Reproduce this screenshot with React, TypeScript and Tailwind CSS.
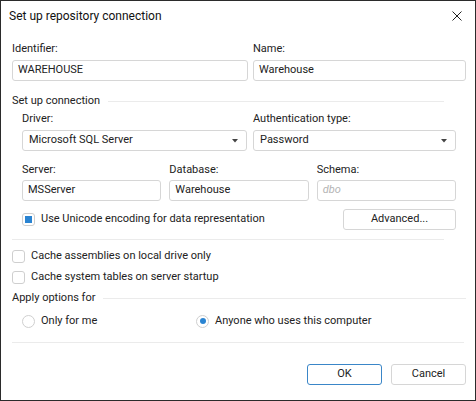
import React from "react";

const font = { fontFamily: 'Roboto, "Liberation Sans", Arial, sans-serif' };

function TextBox({ value, placeholder }: { value?: string; placeholder?: string }) {
  return (
    <div className="flex h-[21px] items-center rounded-[3px] border border-[#d6d6d6] bg-white px-[5px]">
      {value ? (
        <span className="text-[11px] text-[#222]">{value}</span>
      ) : (
        <span className="text-[11px] italic text-[#b4b4b4]">{placeholder}</span>
      )}
    </div>
  );
}

function Combo({ value }: { value: string }) {
  return (
    <div className="flex h-[21px] items-center justify-between rounded-[3px] border border-[#d6d6d6] bg-white pl-[6px] pr-[8px]">
      <span className="text-[11px] text-[#222]">{value}</span>
      <svg width="6" height="4" viewBox="0 0 6 4">
        <path d="M0 0h6L3 3.5z" fill="#444" />
      </svg>
    </div>
  );
}

function Label({ children }: { children: React.ReactNode }) {
  return <div className="flex h-[16px] items-center text-[11px] text-[#222]">{children}</div>;
}

function Check({ checked }: { checked?: boolean }) {
  return (
    <span className="flex h-[13px] w-[13px] shrink-0 items-center justify-center rounded-[3px] border border-[#cfcfcf] bg-white">
      {checked && <span className="h-[7px] w-[7px] bg-[#2a84d2]" />}
    </span>
  );
}

function Radio({ checked }: { checked?: boolean }) {
  return (
    <span className="flex h-[13px] w-[13px] shrink-0 items-center justify-center rounded-full border border-[#cfcfcf] bg-white">
      {checked && <span className="h-[6px] w-[6px] rounded-full bg-[#2a84d2]" />}
    </span>
  );
}

function GroupHeader({ title }: { title: string }) {
  return (
    <div className="flex h-[16px] items-center gap-[8px]">
      <span className="text-[11px] text-[#222]">{title}</span>
      <div className="h-px flex-1 bg-[#ebebeb]" />
    </div>
  );
}

export default function App() {
  return (
    <div
      className="flex h-[401px] w-[476px] flex-col border border-[#2b2b2b] bg-white"
      style={font}
    >
      {/* Title */}
      <div className="flex h-[30px] items-center justify-between pl-[8px] pr-[13px]">
        <span className="text-[12px] text-[#111]">Set up repository connection</span>
        <svg width="10" height="10" viewBox="0 0 10 10">
          <path d="M0.5 0.5l9 9M9.5 0.5l-9 9" stroke="#222" strokeWidth="1" />
        </svg>
      </div>

      <div className="flex flex-1 flex-col pl-[11px] pr-[9px]">
        {/* Identifier / Name */}
        <div className="mt-[10px] flex gap-[5px]">
          <div className="flex w-[236px] flex-col gap-[3px]">
            <Label>Identifier:</Label>
            <TextBox value="WAREHOUSE" />
          </div>
          <div className="flex flex-1 flex-col gap-[3px]">
            <Label>Name:</Label>
            <TextBox value="Warehouse" />
          </div>
        </div>

        {/* Set up connection */}
        <div className="mt-[12px] pr-[22px]">
          <GroupHeader title="Set up connection" />
        </div>
        <div className="flex flex-col pl-[10px] pr-[10px]">
          <div className="mt-[2px] flex gap-[6px]">
            <div className="flex w-[225px] flex-col gap-[3px]">
              <Label>Driver:</Label>
              <Combo value="Microsoft SQL Server" />
            </div>
            <div className="flex flex-1 flex-col gap-[3px]">
              <Label>Authentication type:</Label>
              <Combo value="Password" />
            </div>
          </div>
          <div className="mt-[11px] grid grid-cols-3 gap-x-[8px]">
            <div className="flex flex-col gap-[2px]">
              <Label>Server:</Label>
              <TextBox value="MSServer" />
            </div>
            <div className="flex flex-col gap-[2px]">
              <Label>Database:</Label>
              <TextBox value="Warehouse" />
            </div>
            <div className="flex flex-col gap-[2px]">
              <Label>Schema:</Label>
              <TextBox placeholder="dbo" />
            </div>
          </div>
          <div className="mt-[8px] flex h-[21px] items-center justify-between">
            <div className="flex items-center gap-[6px]">
              <Check checked />
              <span className="text-[11px] text-[#222]">Use Unicode encoding for data representation</span>
            </div>
            <button className="flex h-[21px] w-[113px] items-center justify-center rounded-[3px] border border-[#d6d6d6] bg-white text-[11px] text-[#222]">
              Advanced...
            </button>
          </div>
        </div>
        <div className="mt-[9px] mr-[22px] h-px bg-[#ebebeb]" />

        {/* Cache options */}
        <div className="mt-[6px] flex h-[21px] items-center gap-[6px]">
          <Check />
          <span className="text-[11px] text-[#222]">Cache assemblies on local drive only</span>
        </div>
        <div className="flex h-[21px] items-center gap-[6px]">
          <Check />
          <span className="text-[11px] text-[#222]">Cache system tables on server startup</span>
        </div>

        {/* Apply options */}
        <div className="mt-[2px]">
          <GroupHeader title="Apply options for" />
        </div>
        <div className="mt-[5px] flex h-[20px] items-center pl-[10px]">
          <div className="flex w-[174px] items-center gap-[6px]">
            <Radio />
            <span className="text-[11px] text-[#222]">Only for me</span>
          </div>
          <div className="flex items-center gap-[6px]">
            <Radio checked />
            <span className="text-[11px] text-[#222]">Anyone who uses this computer</span>
          </div>
        </div>
        <div className="mt-[11px] mr-[2px] h-px bg-[#ebebeb]" />

        {/* Buttons */}
        <div className="mt-[21px] flex justify-end gap-[9px]">
          <button className="flex h-[21px] w-[75px] items-center justify-center rounded-[3px] border border-[#3a86c8] bg-white text-[11px] text-[#222]">
            OK
          </button>
          <button className="flex h-[21px] w-[75px] items-center justify-center rounded-[3px] border border-[#d6d6d6] bg-white text-[11px] text-[#222]">
            Cancel
          </button>
        </div>
      </div>
    </div>
  );
}
